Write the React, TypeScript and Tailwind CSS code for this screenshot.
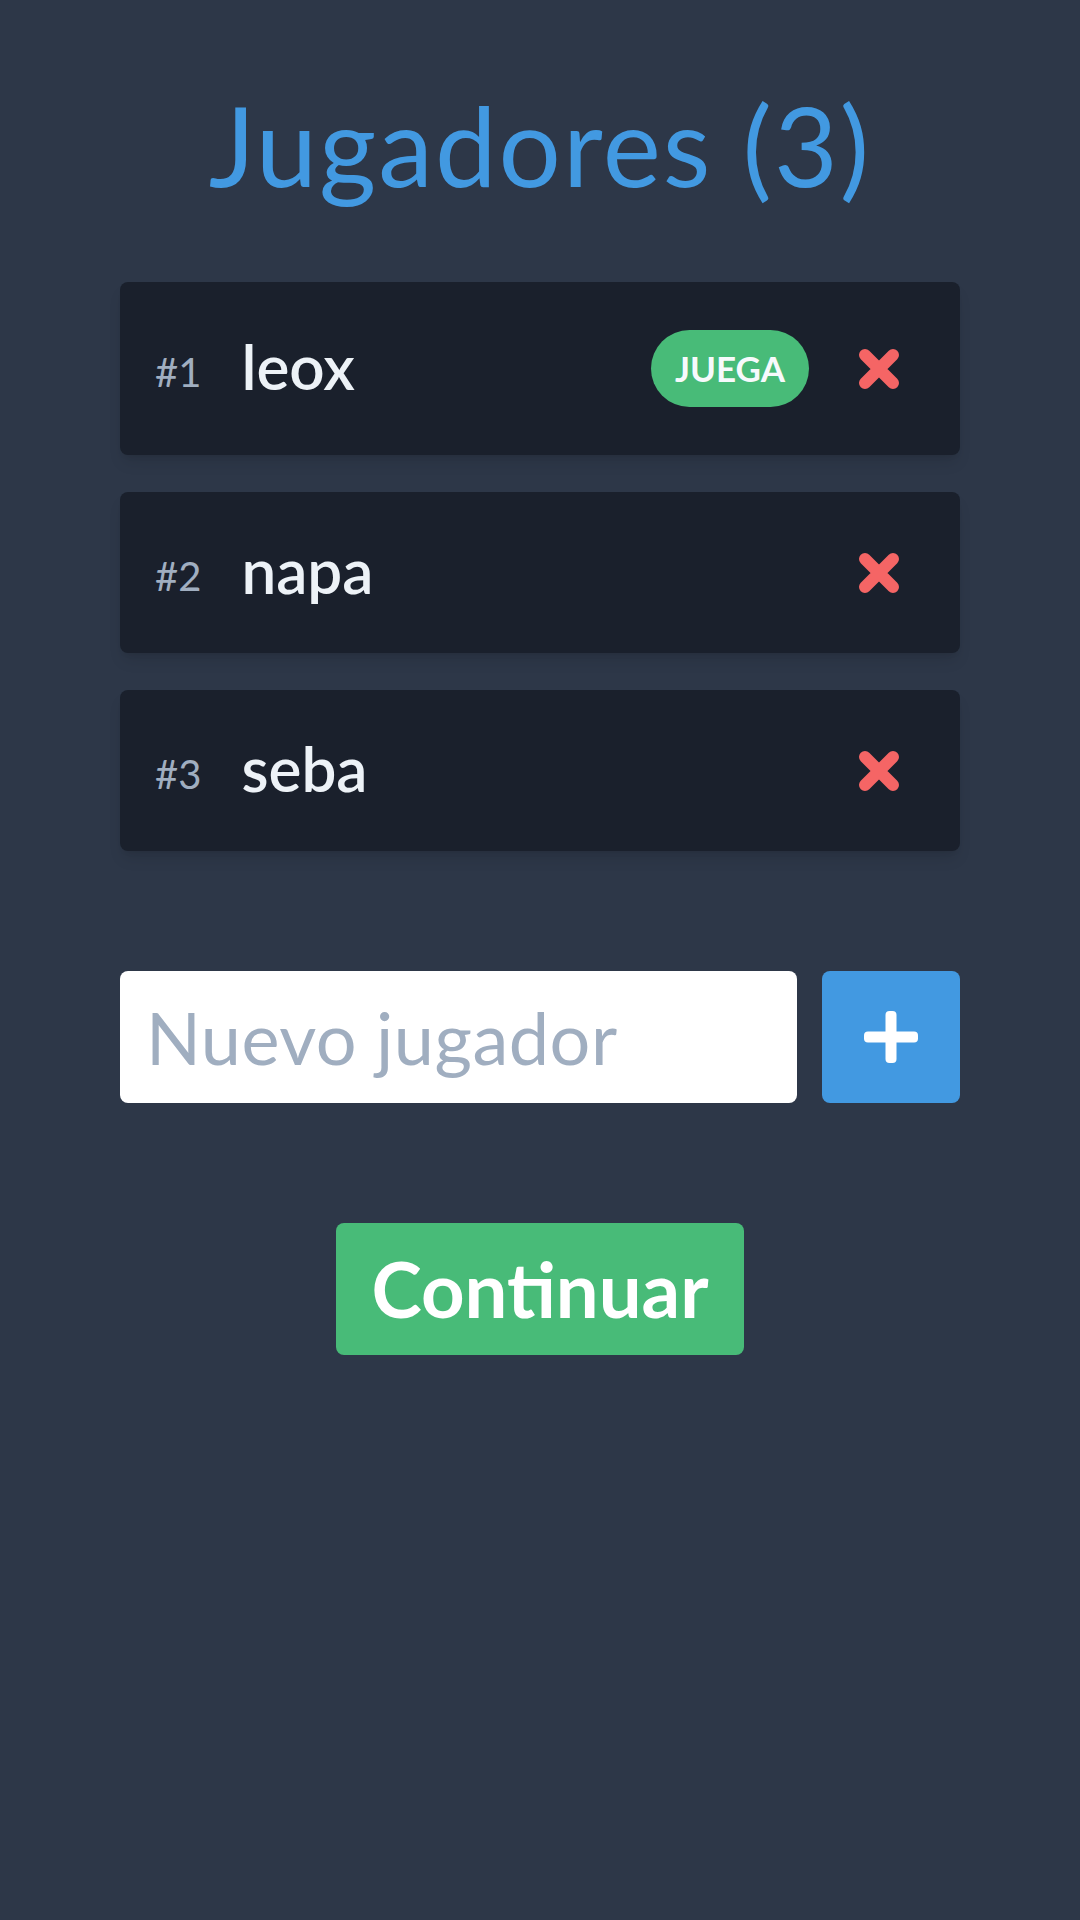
import React from "react";

const players = [
  { n: 1, name: "leox", plays: true },
  { n: 2, name: "napa", plays: false },
  { n: 3, name: "seba", plays: false },
];

function XIcon() {
  return (
    <svg width="42" height="42" viewBox="0 0 42 42" className="shrink-0">
      <path d="M7 7 L35 35 M35 7 L7 35" stroke="#f56565" strokeWidth="12" strokeLinecap="round" fill="none" />
    </svg>
  );
}

function PlusIcon() {
  return (
    <svg width="54" height="52" viewBox="0 0 54 52">
      <rect x="21.5" y="0" width="11" height="52" rx="4" fill="#ffffff" />
      <rect x="0" y="20.5" width="54" height="11" rx="4" fill="#ffffff" />
    </svg>
  );
}

export default function App() {
  return (
    <div className="min-h-screen w-full bg-[#2d3748] font-[Lato,sans-serif]">
      <div className="px-[120px] pt-[89px]">
        <h1 className="text-center text-[110px] leading-none font-normal tracking-[2px] text-[#4299e1]">Jugadores (3)</h1>
        <div className="mt-[83px] flex flex-col gap-[37px]">
          {players.map((p) => (
            <div
              key={p.n}
              className="flex items-center rounded-lg bg-[#1a202c] py-[48px] pl-[35px] pr-[60px] shadow-lg"
            >
              <span className="mr-[40px] pt-[6px] text-[40px] leading-none text-[#a0aec0]">#{p.n}</span>
              <span className="flex-1 pb-[4px] text-[62px] font-semibold leading-[61px] text-[#edf2f7]">{p.name}</span>
              {p.plays && (
                <span className="mr-[49px] flex h-[77px] w-[158px] items-center justify-center rounded-full bg-[#48bb78] text-[35px] font-bold text-[#f7fafc]">
                  JUEGA
                </span>
              )}
              <XIcon />
            </div>
          ))}
        </div>
        <div className="mt-[120px] flex gap-[25px]">
          <input
            className="h-[132px] min-w-0 flex-1 rounded-lg bg-white pl-[26px] text-[72px] tracking-[0.5px] text-[#2d3748] outline-none placeholder:text-[#a0aec0]"
            placeholder="Nuevo jugador"
          />
          <button className="flex h-[132px] w-[138px] items-center justify-center rounded-lg bg-[#4299e1]">
            <PlusIcon />
          </button>
        </div>
        <div className="mt-[120px] flex justify-center">
          <button className="flex h-[132px] w-[408px] items-center justify-center rounded-lg bg-[#48bb78] text-[76px] font-bold text-white">
            Continuar
          </button>
        </div>
      </div>
    </div>
  );
}
